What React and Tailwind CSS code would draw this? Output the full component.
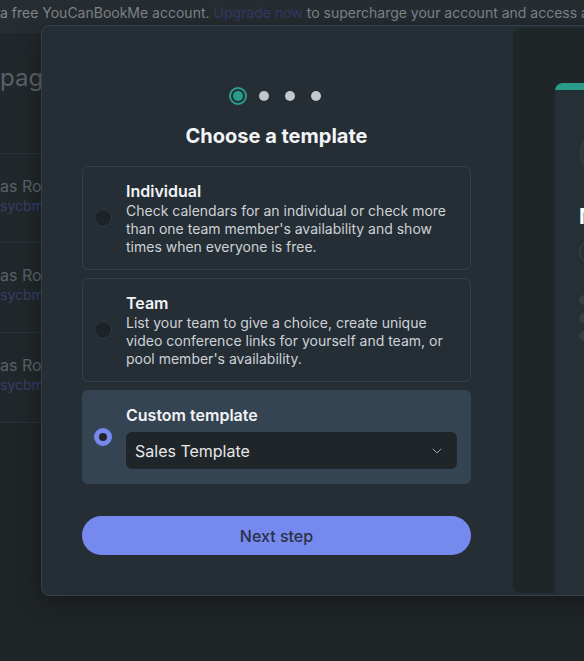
import React from "react";
import { ChevronDown } from "lucide-react";

function Radio({ selected }) {
  if (selected) {
    return (
      <div className="w-[18px] h-[18px] shrink-0 rounded-full border-[5px] border-[#7689ee] bg-[#1f2528]" />
    );
  }
  return (
    <div className="w-[18px] h-[18px] shrink-0 rounded-full bg-[#1d2428] border border-[#2f3a42]" />
  );
}

function OptionCard({ title, desc }) {
  return (
    <div className="flex items-center gap-[14px] rounded-md border border-[#344049] pl-[11px] pr-[12px] pt-[13px] pb-[13px]">
      <Radio />
      <div className="flex flex-col">
        <div className="text-[16px] leading-[22px] font-semibold text-[#f1f3f5]">{title}</div>
        <div className="text-[14px] leading-[18px] text-[#cdd2d7]">{desc}</div>
      </div>
    </div>
  );
}

function Row() {
  return (
    <div className="h-[90px] border-t border-[#2a3136] pt-[22px] flex flex-col whitespace-nowrap">
      <div className="text-[16px] leading-[20px] text-[#5b6267]">as Room</div>
      <div className="text-[14px] leading-[20px] text-[#363f6a]">sycbml.youcanbook.me</div>
    </div>
  );
}

export default function App() {
  return (
    <div className="relative w-[584px] h-[661px] overflow-hidden bg-[#1f2427] font-['Inter',sans-serif]">
      <div className="h-[33px] bg-[#272d31] flex items-start pt-[4px] whitespace-nowrap overflow-hidden text-[14px] leading-[18px] text-[#7f868c]">
        <span>a free YouCanBookMe account.</span>
        <span className="ml-[4px] text-[#323b66]">Upgrade now</span>
        <span className="ml-[4px]">to supercharge your account and access all features</span>
      </div>
      <div className="bg-[#21272a] h-[390px] flex flex-col">
        <div className="h-[120px] pt-[29px] text-[24px] leading-[32px] text-[#5a6166] whitespace-nowrap">pages</div>
        <Row />
        <Row />
        <Row />
        <div className="border-t border-[#2a3136]" />
      </div>

      <div className="absolute left-[41px] top-[25px] w-[720px] h-[571px] rounded-lg border border-[#33414c] bg-[#252e35] shadow-[0_4px_24px_rgba(0,0,0,0.35)] flex overflow-hidden">
        <div className="w-[471px] shrink-0 pl-[40px] pr-[42px] pt-[61px] flex flex-col">
          <div className="flex justify-center gap-[8px]">
            <div className="w-[18px] h-[18px] flex items-center justify-center">
              <div className="w-[18px] h-[18px] rounded-full border-2 border-[#2a9d8a] p-[2px]">
                <div className="w-full h-full rounded-full bg-[#2a9d8a]" />
              </div>
            </div>
            {[0, 1, 2].map((i) => (
              <div key={i} className="w-[18px] h-[18px] flex items-center justify-center">
                <div className="w-[10px] h-[10px] rounded-full bg-[#c4c8cc]" />
              </div>
            ))}
          </div>
          <h2 className="mt-[17px] text-center text-[20px] leading-[28px] font-bold text-[#f3f4f6]">
            Choose a template
          </h2>
          <div className="mt-[16px] flex flex-col gap-[8px]">
            <OptionCard
              title="Individual"
              desc="Check calendars for an individual or check more than one team member's availability and show times when everyone is free."
            />
            <OptionCard
              title="Team"
              desc="List your team to give a choice, create unique video conference links for yourself and team, or pool member's availability."
            />
            <div className="flex items-center gap-[14px] rounded-md bg-[#354452] pl-[12px] pr-[14px] py-[15px]">
              <Radio selected />
              <div className="flex-1 flex flex-col gap-[7px]">
                <div className="text-[16px] leading-[20px] font-semibold text-[#f1f3f5]">Custom template</div>
                <div className="h-[37px] rounded-md bg-[#1f2528] flex items-center justify-between pl-[9px] pr-[12px]">
                  <span className="text-[16px] text-[#e6e8ea]">Sales Template</span>
                  <ChevronDown size={16} strokeWidth={1.5} className="text-[#9aa1a7]" />
                </div>
              </div>
            </div>
          </div>
          <button className="mt-[32px] h-[39px] w-full rounded-full bg-[#7689ee] text-[16px] leading-[20px] font-medium text-[#2a3045]">
            Next step
          </button>
        </div>

        <div className="flex-1 my-[2px] bg-[#1f2628] rounded-l-lg pl-[42px] pt-[55px]">
          <div className="h-full bg-[#253036] rounded-tl-lg overflow-hidden">
            <div className="h-[7px] bg-[#2a9d8a]" />
            <div className="pl-[24px] pt-[40px] flex flex-col">
              <div className="w-[46px] h-[46px] rounded-full bg-[#2d383f]" />
              <div className="mt-[28px] text-[21px] leading-[26px] font-bold text-white whitespace-nowrap">New booking</div>
              <div className="mt-[11px] w-[22px] h-[22px] rounded-full border border-[#3a454c]" />
              <div className="mt-[32px] flex flex-col gap-[8px]">
                <div className="w-[10px] h-[10px] rounded-full bg-[#333e45]" />
                <div className="w-[10px] h-[10px] rounded-full bg-[#333e45]" />
                <div className="w-[10px] h-[10px] rounded-full bg-[#333e45]" />
              </div>
            </div>
          </div>
        </div>
      </div>
    </div>
  );
}
